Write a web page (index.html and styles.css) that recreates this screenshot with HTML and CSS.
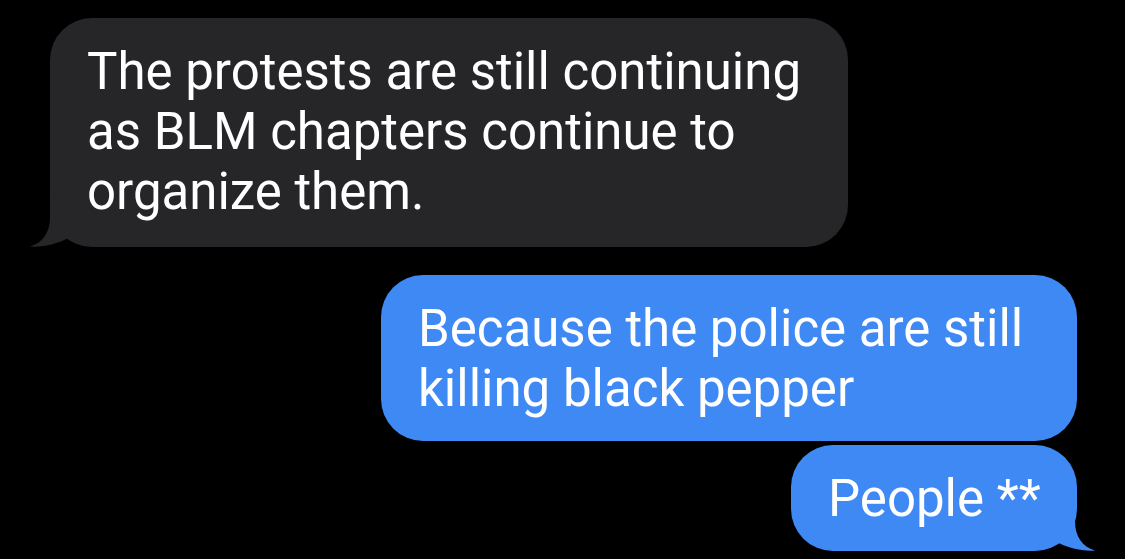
FILE: index.html
```html
<!DOCTYPE html>
<html>
  <head>
    <title>Messages</title>
    <link rel="stylesheet" href="styles.css">
  </head>
  <body>
    <div class="thread">
      <div class="bubble received has-tail">
        The protests are still continuing<br>
        as BLM chapters continue to<br>
        organize them.
        <svg class="tail tail-left" viewBox="0 0 60 50" width="60" height="50">
          <path d="M20,0 L20,20 C20,35 13,46 0,49.5 C12,50.5 28,47 40,40 L56,12 Z" />
        </svg>
      </div>
      <div class="bubble sent first">
        Because the police are still<br>
        killing black pepper
      </div>
      <div class="bubble sent last has-tail">
        People **
        <svg class="tail tail-right" viewBox="0 0 60 50" width="60" height="50">
          <path d="M40,0 L40,20 C40,35 47,46 60,49.5 C48,50.5 32,47 20,40 L4,12 Z" />
        </svg>
      </div>
    </div>
  </body>
</html>
```

FILE: styles.css
```css
body {
  margin: 0;
  background-color: #000;
  color: #fff;
  font-family: Roboto, "Liberation Sans", sans-serif;
}

.thread {
  display: flex;
  flex-direction: column;
  padding: 18px 48px 0 50px;
}

.bubble {
  position: relative;
  box-sizing: border-box;
  border-radius: 42px;
  font-size: 51px;
  line-height: 60px;
  padding: 24px 37px 25px 37px;
  white-space: nowrap;
}

.received {
  background-color: #262629;
  width: 798px;
  align-self: flex-start;
}

.sent {
  background-color: #3f89f5;
  align-self: flex-end;
  padding-bottom: 22px;
}

.sent.first {
  width: 696px;
  margin-top: 28px;
}

.sent.last {
  width: 286px;
  margin-top: 4px;
}

/* little curl at the bottom corner of the last bubble */
.tail {
  position: absolute;
  bottom: 0;
}

.tail-left {
  left: -20px;
  fill: #262629;
}

.tail-right {
  right: -18px;
  fill: #3f89f5;
}
```
